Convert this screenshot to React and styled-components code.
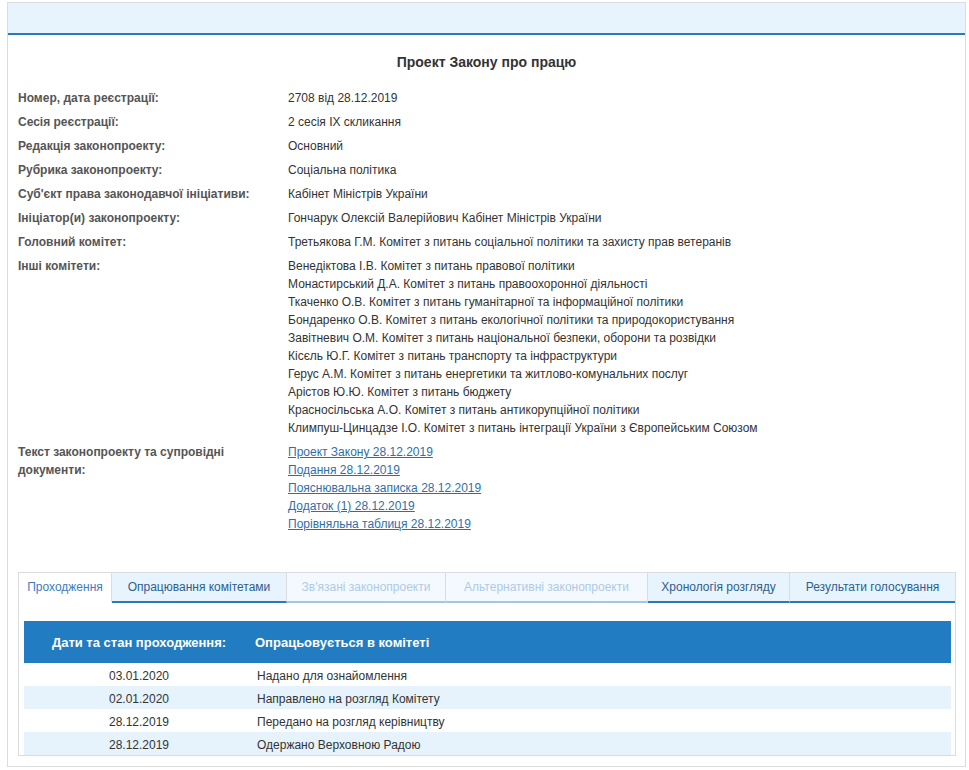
import React from "react";
import styled, { createGlobalStyle } from "styled-components";

const Global = createGlobalStyle`
  html, body { margin: 0; padding: 0; background: #fff; }
  body { font-family: "Liberation Sans", Arial, sans-serif; font-size: 12px; color: #333; }
`;

const Page = styled.div`
  margin: 2px 3px 0 7px;
  width: 957px;
  border: 1px solid #dcdcdc;
  background: #fff;
`;

const TopBand = styled.div`
  height: 30px;
  background: #e8f4fd;
  border-bottom: 2px solid #2a7ab8;
`;

const Title = styled.h1`
  margin: 0;
  padding: 18px 0 15px;
  text-align: center;
  font-size: 14px;
  line-height: 18px;
  font-weight: bold;
  color: #333;
`;

const InfoList = styled.div`
  display: flex;
  flex-direction: column;
  padding: 0 0 0 10px;
`;

const InfoRow = styled.div`
  display: flex;
  padding: 3px 0;
  line-height: 18px;
`;

const Label = styled.div`
  width: 250px;
  padding-right: 20px;
  flex: none;
  font-weight: bold;
  color: #555;
`;

const Value = styled.div`
  display: flex;
  flex-direction: column;
  color: #333;
`;

const DocLink = styled.a`
  color: #2f6fa7;
  text-decoration: underline;
  cursor: pointer;
`;

const TabBox = styled.div`
  margin: 36px 9px 10px 10px;
  border: 1px solid #dcdcdc;
`;

const TabBar = styled.div`
  display: flex;
  height: 30px;
`;

const Tab = styled.div`
  flex: ${(p) => (p.$w ? "none" : "1")};
  width: ${(p) => (p.$w ? `${p.$w}px` : "auto")};
  display: flex;
  align-items: center;
  justify-content: center;
  box-sizing: border-box;
  height: 30px;
  white-space: nowrap;
  font-size: 12px;
  border-right: ${(p) => (p.$w ? "1px solid #dcdcdc" : "none")};
  background: ${(p) =>
    p.$active ? "#fff" : p.$disabled ? "#f3f9fe" : "#e8f4fd"};
  color: ${(p) =>
    p.$active ? "#3a7cbd" : p.$disabled ? "#aecbe5" : "#2c5e90"};
  border-bottom: 2px solid
    ${(p) => (p.$active ? "#fff" : p.$disabled ? "#a6c5df" : "#2a7ab8")};
`;

const TabContent = styled.div`
  padding: 18px 4px 0 5px;
`;

const Table = styled.div`
  display: flex;
  flex-direction: column;
`;

const HeadRow = styled.div`
  display: grid;
  grid-template-columns: 230px 1fr;
  height: 42px;
  align-items: center;
  background: #217cc2;
  color: #fff;
  font-weight: bold;
  font-size: 13px;
`;

const HeadCell = styled.div`
  text-align: ${(p) => (p.$center ? "center" : "left")};
  padding-left: ${(p) => (p.$center ? "0" : "1px")};
`;

const BodyRow = styled.div`
  display: grid;
  grid-template-columns: 230px 1fr;
  height: 23px;
  align-items: center;
  background: ${(p) => (p.$alt ? "#e6f3fd" : "#fff")};
  color: #333;
`;

const Cell = styled.div`
  text-align: ${(p) => (p.$center ? "center" : "left")};
  padding-left: ${(p) => (p.$center ? "0" : "3px")};
  padding-top: 2px;
`;

const info = [
  ["Номер, дата реєстрації:", ["2708 від 28.12.2019"]],
  ["Сесія реєстрації:", ["2 сесія IX скликання"]],
  ["Редакція законопроекту:", ["Основний"]],
  ["Рубрика законопроекту:", ["Соціальна політика"]],
  ["Суб'єкт права законодавчої ініціативи:", ["Кабінет Міністрів України"]],
  ["Ініціатор(и) законопроекту:", ["Гончарук Олексій Валерійович Кабінет Міністрів України"]],
  ["Головний комітет:", ["Третьякова Г.М. Комітет з питань соціальної політики та захисту прав ветеранів"]],
  [
    "Інші комітети:",
    [
      "Венедіктова І.В. Комітет з питань правової політики",
      "Монастирський Д.А. Комітет з питань правоохоронної діяльності",
      "Ткаченко О.В. Комітет з питань гуманітарної та інформаційної політики",
      "Бондаренко О.В. Комітет з питань екологічної політики та природокористування",
      "Завітневич О.М. Комітет з питань національної безпеки, оборони та розвідки",
      "Кісєль Ю.Г. Комітет з питань транспорту та інфраструктури",
      "Герус А.М. Комітет з питань енергетики та житлово-комунальних послуг",
      "Арістов Ю.Ю. Комітет з питань бюджету",
      "Красносільська А.О. Комітет з питань антикорупційної політики",
      "Климпуш-Цинцадзе І.О. Комітет з питань інтеграції України з Європейським Союзом",
    ],
  ],
];

const docs = [
  "Проект Закону 28.12.2019",
  "Подання 28.12.2019",
  "Пояснювальна записка 28.12.2019",
  "Додаток (1) 28.12.2019",
  "Порівняльна таблиця 28.12.2019",
];

const tabs = [
  { t: "Проходження", active: true, w: 93 },
  { t: "Опрацювання комітетами", w: 175 },
  { t: "Зв'язані законопроекти", disabled: true, w: 159 },
  { t: "Альтернативні законопроекти", disabled: true, w: 202 },
  { t: "Хронологія розгляду", w: 142 },
  { t: "Результати голосування" },
];

const rows = [
  ["03.01.2020", "Надано для ознайомлення"],
  ["02.01.2020", "Направлено на розгляд Комітету"],
  ["28.12.2019", "Передано на розгляд керівництву"],
  ["28.12.2019", "Одержано Верховною Радою"],
];

export default function App() {
  return (
    <>
      <Global />
      <Page>
        <TopBand />
        <Title>Проект Закону про працю</Title>
        <InfoList>
          {info.map(([l, vals]) => (
            <InfoRow key={l}>
              <Label>{l}</Label>
              <Value>
                {vals.map((v) => (
                  <span key={v}>{v}</span>
                ))}
              </Value>
            </InfoRow>
          ))}
          <InfoRow>
            <Label>Текст законопроекту та супровідні документи:</Label>
            <Value>
              {docs.map((d) => (
                <span key={d}>
                  <DocLink>{d}</DocLink>
                </span>
              ))}
            </Value>
          </InfoRow>
        </InfoList>
        <TabBox>
          <TabBar>
            {tabs.map((t) => (
              <Tab key={t.t} $w={t.w} $active={t.active} $disabled={t.disabled}>
                {t.t}
              </Tab>
            ))}
          </TabBar>
          <TabContent>
            <Table>
              <HeadRow>
                <HeadCell $center>Дати та стан проходження:</HeadCell>
                <HeadCell>Опрацьовується в комітеті</HeadCell>
              </HeadRow>
              {rows.map(([d, s], i) => (
                <BodyRow key={i} $alt={i % 2 === 1}>
                  <Cell $center>{d}</Cell>
                  <Cell>{s}</Cell>
                </BodyRow>
              ))}
            </Table>
          </TabContent>
        </TabBox>
      </Page>
    </>
  );
}
